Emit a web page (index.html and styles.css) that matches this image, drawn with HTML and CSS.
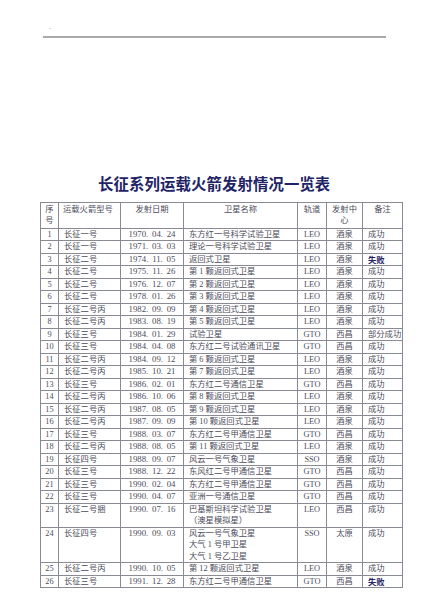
FILE: index.html
```html
<!DOCTYPE html>
<html lang="zh-CN">
<head>
<meta charset="utf-8">
<link rel="stylesheet" href="styles.css">
</head>
<body>
<div class="page">
  <div class="topbar"><span class="dot">.</span></div>
  <h1 class="title">长征系列运载火箭发射情况一览表</h1>
  <table class="grid">
    <colgroup>
      <col class="c-no"><col class="c-rocket"><col class="c-date"><col class="c-sat"><col class="c-orbit"><col class="c-site"><col class="c-note">
    </colgroup>
    <thead>
      <tr><th class="ctr">序<br>号</th><th class="lft">运载火箭型号</th><th class="ctr">发射日期</th><th class="ctr">卫星名称</th><th class="ctr">轨道</th><th class="ctr">发射中<br>心</th><th class="ctr">备注</th></tr>
    </thead>
    <tbody>
      <tr><td class="ctr">1</td><td>长征一号</td><td class="date">1970. 04. 24</td><td>东方红一号科学试验卫星</td><td class="ctr">LEO</td><td class="ctr">酒泉</td><td>成功</td></tr>
      <tr><td class="ctr">2</td><td>长征一号</td><td class="date">1971. 03. 03</td><td>理论一号科学试验卫星</td><td class="ctr">LEO</td><td class="ctr">酒泉</td><td>成功</td></tr>
      <tr><td class="ctr">3</td><td>长征二号</td><td class="date">1974. 11. 05</td><td>返回式卫星</td><td class="ctr">LEO</td><td class="ctr">酒泉</td><td class="fail">失败</td></tr>
      <tr><td class="ctr">4</td><td>长征二号</td><td class="date">1975. 11. 26</td><td>第 1 颗返回式卫星</td><td class="ctr">LEO</td><td class="ctr">酒泉</td><td>成功</td></tr>
      <tr><td class="ctr">5</td><td>长征二号</td><td class="date">1976. 12. 07</td><td>第 2 颗返回式卫星</td><td class="ctr">LEO</td><td class="ctr">酒泉</td><td>成功</td></tr>
      <tr><td class="ctr">6</td><td>长征二号</td><td class="date">1978. 01. 26</td><td>第 3 颗返回式卫星</td><td class="ctr">LEO</td><td class="ctr">酒泉</td><td>成功</td></tr>
      <tr><td class="ctr">7</td><td>长征二号丙</td><td class="date">1982. 09. 09</td><td>第 4 颗返回式卫星</td><td class="ctr">LEO</td><td class="ctr">酒泉</td><td>成功</td></tr>
      <tr><td class="ctr">8</td><td>长征二号丙</td><td class="date">1983. 08. 19</td><td>第 5 颗返回式卫星</td><td class="ctr">LEO</td><td class="ctr">酒泉</td><td>成功</td></tr>
      <tr><td class="ctr">9</td><td>长征三号</td><td class="date">1984. 01. 29</td><td>试验卫星</td><td class="ctr">GTO</td><td class="ctr">西昌</td><td>部分成功</td></tr>
      <tr><td class="ctr">10</td><td>长征三号</td><td class="date">1984. 04. 08</td><td>东方红二号试验通讯卫星</td><td class="ctr">GTO</td><td class="ctr">西昌</td><td>成功</td></tr>
      <tr><td class="ctr">11</td><td>长征二号丙</td><td class="date">1984. 09. 12</td><td>第 6 颗返回式卫星</td><td class="ctr">LEO</td><td class="ctr">酒泉</td><td>成功</td></tr>
      <tr><td class="ctr">12</td><td>长征二号丙</td><td class="date">1985. 10. 21</td><td>第 7 颗返回式卫星</td><td class="ctr">LEO</td><td class="ctr">酒泉</td><td>成功</td></tr>
      <tr><td class="ctr">13</td><td>长征三号</td><td class="date">1986. 02. 01</td><td>东方红二号通信卫星</td><td class="ctr">GTO</td><td class="ctr">西昌</td><td>成功</td></tr>
      <tr><td class="ctr">14</td><td>长征二号丙</td><td class="date">1986. 10. 06</td><td>第 8 颗返回式卫星</td><td class="ctr">LEO</td><td class="ctr">酒泉</td><td>成功</td></tr>
      <tr><td class="ctr">15</td><td>长征二号丙</td><td class="date">1987. 08. 05</td><td>第 9 颗返回式卫星</td><td class="ctr">LEO</td><td class="ctr">酒泉</td><td>成功</td></tr>
      <tr><td class="ctr">16</td><td>长征二号丙</td><td class="date">1987. 09. 09</td><td>第 10 颗返回式卫星</td><td class="ctr">LEO</td><td class="ctr">酒泉</td><td>成功</td></tr>
      <tr><td class="ctr">17</td><td>长征三号</td><td class="date">1988. 03. 07</td><td>东方红二号甲通信卫星</td><td class="ctr">GTO</td><td class="ctr">西昌</td><td>成功</td></tr>
      <tr><td class="ctr">18</td><td>长征二号丙</td><td class="date">1988. 08. 05</td><td>第 11 颗返回式卫星</td><td class="ctr">LEO</td><td class="ctr">酒泉</td><td>成功</td></tr>
      <tr><td class="ctr">19</td><td>长征四号</td><td class="date">1988. 09. 07</td><td>风云一号气象卫星</td><td class="ctr">SSO</td><td class="ctr">酒泉</td><td>成功</td></tr>
      <tr><td class="ctr">20</td><td>长征三号</td><td class="date">1988. 12. 22</td><td>东风红二号甲通信卫星</td><td class="ctr">GTO</td><td class="ctr">西昌</td><td>成功</td></tr>
      <tr><td class="ctr">21</td><td>长征三号</td><td class="date">1990. 02. 04</td><td>东方红二号甲通信卫星</td><td class="ctr">GTO</td><td class="ctr">西昌</td><td>成功</td></tr>
      <tr><td class="ctr">22</td><td>长征三号</td><td class="date">1990. 04. 07</td><td>亚洲一号通信卫星</td><td class="ctr">GTO</td><td class="ctr">西昌</td><td>成功</td></tr>
      <tr class="top"><td class="ctr">23</td><td>长征二号捆</td><td class="date">1990. 07. 16</td><td>巴基斯坦科学试验卫星<br>（澳星模拟星）</td><td class="ctr">LEO</td><td class="ctr">西昌</td><td>成功</td></tr>
      <tr class="top"><td class="ctr">24</td><td>长征四号</td><td class="date">1990. 09. 03</td><td>风云一号气象卫星<br>大气 1 号甲卫星<br>大气 1 号乙卫星</td><td class="ctr">SSO</td><td class="ctr">太原</td><td>成功</td></tr>
      <tr><td class="ctr">25</td><td>长征二号丙</td><td class="date">1990. 10. 05</td><td>第 12 颗返回式卫星</td><td class="ctr">LEO</td><td class="ctr">酒泉</td><td>成功</td></tr>
      <tr><td class="ctr">26</td><td>长征三号</td><td class="date">1991. 12. 28</td><td>东方红二号甲通信卫星</td><td class="ctr">GTO</td><td class="ctr">西昌</td><td class="fail">失败</td></tr>
    </tbody>
  </table>
</div>
</body>
</html>
```

FILE: styles.css
```css
html, body {
  margin: 0;
  padding: 0;
  background: #ffffff;
}
.page {
  width: 424px;
  height: 600px;
  overflow: hidden;
  font-family: "Liberation Serif", "Noto Sans CJK SC", serif;
  color: #4d4d5c;
}
.topbar {
  margin: 28px 38px 0 43px;
  height: 8px;
  border-bottom: 2px solid #a9a9a9;
  position: relative;
}
.dot {
  position: absolute;
  left: 6px;
  top: -6px;
  font-size: 8px;
  color: #777;
}
.title {
  margin: 136px 0 0 0;
  padding-left: 98px;
  font-family: "Noto Sans CJK SC", sans-serif;
  font-size: 15.4px;
  line-height: 18px;
  font-weight: 700;
  color: #1f2466;
  letter-spacing: 0.1px;
}
.grid {
  margin: 10px 0 0 40px;
  border-collapse: collapse;
  table-layout: fixed;
  width: 362px;
  font-size: 8.3px;
  border: 1px solid #6f6f7a;
}
.c-no { width: 18px; }
.c-rocket { width: 62px; }
.c-date { width: 63px; }
.c-sat { width: 114px; }
.c-orbit { width: 29px; }
.c-site { width: 36px; }
.c-note { width: 40px; }
.grid th, .grid td {
  border: 1px solid #8a8a94;
  padding: 0 0 0 5px;
  line-height: 11.5px;
  height: 11.5px;
  font-weight: 400;
  white-space: nowrap;
  overflow: hidden;
  vertical-align: middle;
  text-align: left;
  font-family: "Liberation Serif", "Noto Sans CJK SC", serif;
}
.grid th {
  vertical-align: top;
  padding-top: 0.8px;
  padding-bottom: 0.8px;
}
.grid .ctr {
  text-align: center;
  padding-left: 0;
}
.grid .lft {
  padding-left: 4px;
}
.grid .date {
  text-align: center;
  padding-left: 0;
  font-size: 8.8px;
  word-spacing: 1.5px;
}
.grid tr.top td {
  vertical-align: top;
}
.grid .fail {
  font-family: "Noto Sans CJK SC", sans-serif;
  font-weight: 700;
  color: #1f2466;
}
```
